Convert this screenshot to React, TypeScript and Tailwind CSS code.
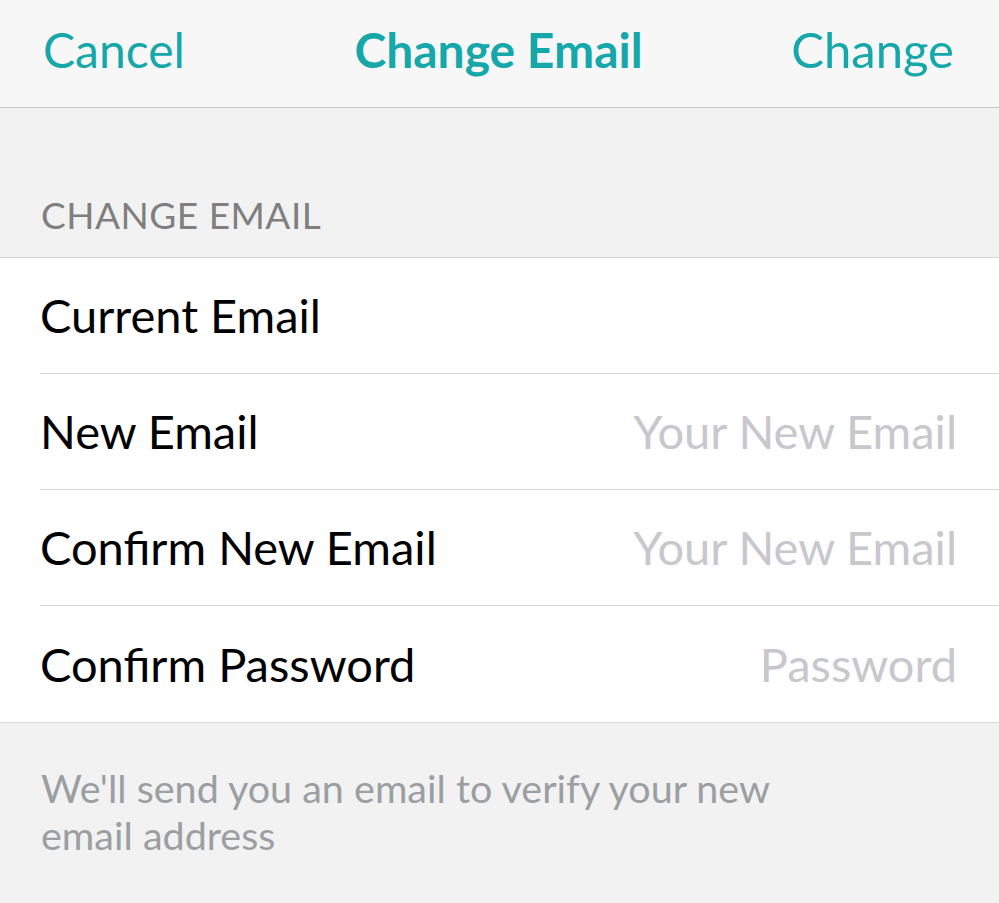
import React from "react";

const ROWS = [
  { label: "Current Email", placeholder: "" },
  { label: "New Email", placeholder: "Your New Email" },
  { label: "Confirm New Email", placeholder: "Your New Email" },
  { label: "Confirm Password", placeholder: "Password" },
];

export default function App() {
  return (
    <div className="w-[999px] h-[903px] bg-[#f2f2f3] font-['Lato',sans-serif] overflow-hidden">
      {/* Nav bar */}
      <div className="h-[108px] bg-[#f7f7f7] border-b border-[#c6c6c6] grid grid-cols-[1fr_auto_1fr] items-center pl-[43px] pr-[45px] pb-2 text-[#16a7aa]">
        <span className="text-[48px] justify-self-start">Cancel</span>
        <span className="text-[48px] font-bold">Change Email</span>
        <span className="text-[49px] justify-self-end">Change</span>
      </div>

      {/* Section header */}
      <div className="h-[149px] flex items-end px-[41px] pb-[15px]">
        <span className="text-[37px] text-[#7f7f7f] tracking-[0.5px]">CHANGE EMAIL</span>
      </div>

      {/* Form rows */}
      <div className="bg-white border-t border-b border-[#d6d6d8]">
        {ROWS.map((row, i) => (
          <div key={row.label} className="pl-[40px]">
            <div
              className={
                "h-[116px] flex items-center justify-between pr-[42px] " +
                (i < ROWS.length - 1 ? "border-b border-[#d6d6d8]" : "")
              }
            >
              <span className="text-[47px] text-black">{row.label}</span>
              <span className="text-[47px] text-[#c7c7cd]">{row.placeholder}</span>
            </div>
          </div>
        ))}
      </div>

      {/* Footer note */}
      <p className="px-[41px] pt-[41px] text-[39.5px] leading-[47px] text-[#9b9fa1] max-w-[860px]">
        We'll send you an email to verify your new email address
      </p>
    </div>
  );
}
